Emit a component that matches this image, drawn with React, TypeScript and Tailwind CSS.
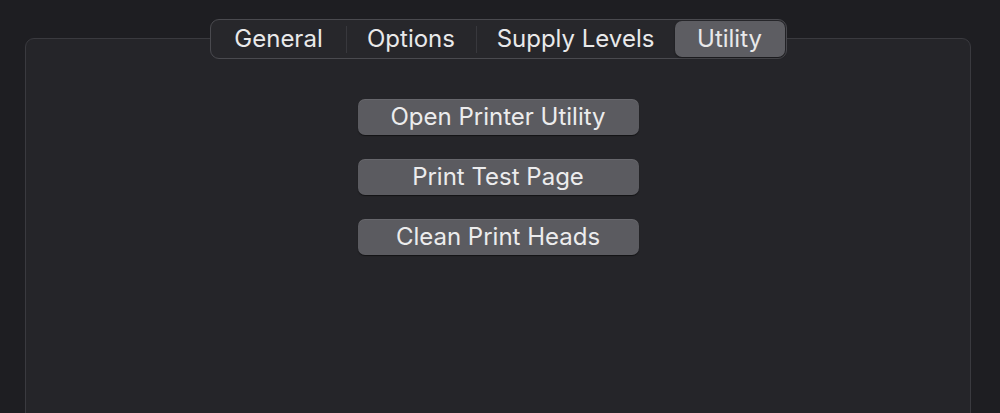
import React from 'react';

const tabs = [
  { label: 'General', width: 'w-[134px]' },
  { label: 'Options', width: 'w-[129px]' },
  { label: 'Supply Levels', width: 'w-[198px]' },
  { label: 'Utility', width: 'w-[110px]' },
];

const actions = ['Open Printer Utility', 'Print Test Page', 'Clean Print Heads'];

const App: React.FC = () => {
  const active = 3;

  return (
    <div
      className="h-[413px] w-[1000px] overflow-hidden bg-[#1e1e22] pt-[19px] text-[#e9e9ea]"
      style={{ fontFamily: 'Inter, "Liberation Sans", sans-serif' }}
    >
      <div className="ml-[25px] flex w-[946px] flex-col items-center">
        {/* segmented control */}
        <div className="relative z-10 flex h-[40px] items-center rounded-[9px] border border-[#4a4a4f] bg-[#27272b] p-[1px]">
          {tabs.map((tab, i) => (
            <React.Fragment key={tab.label}>
              {i > 0 && i < active && (
                <div className="h-[27px] w-px bg-[#38383d]" />
              )}
              <div
                className={`flex h-[36px] items-center justify-center rounded-[7px] text-[24px] leading-none ${tab.width} ${
                  i === active ? 'bg-[#5d5d62] shadow-[0_1px_2px_rgba(0,0,0,0.4)]' : ''
                }`}
              >
                {tab.label}
              </div>
            </React.Fragment>
          ))}
        </div>

        {/* panel */}
        <div className="-mt-[21px] flex h-[420px] w-full flex-col items-center gap-[24px] rounded-[9px] border border-[#3a3a3f] bg-[#252529] pt-[60px]">
          {actions.map((label) => (
            <button
              key={label}
              className="flex h-[36px] w-[281px] items-center justify-center rounded-[7px] bg-[#5b5b60] text-[24px] leading-none text-[#ececed] shadow-[0_1px_1px_rgba(0,0,0,0.5),inset_0_1px_0_rgba(255,255,255,0.08)]"
            >
              {label}
            </button>
          ))}
        </div>
      </div>
    </div>
  );
};

export default App;
